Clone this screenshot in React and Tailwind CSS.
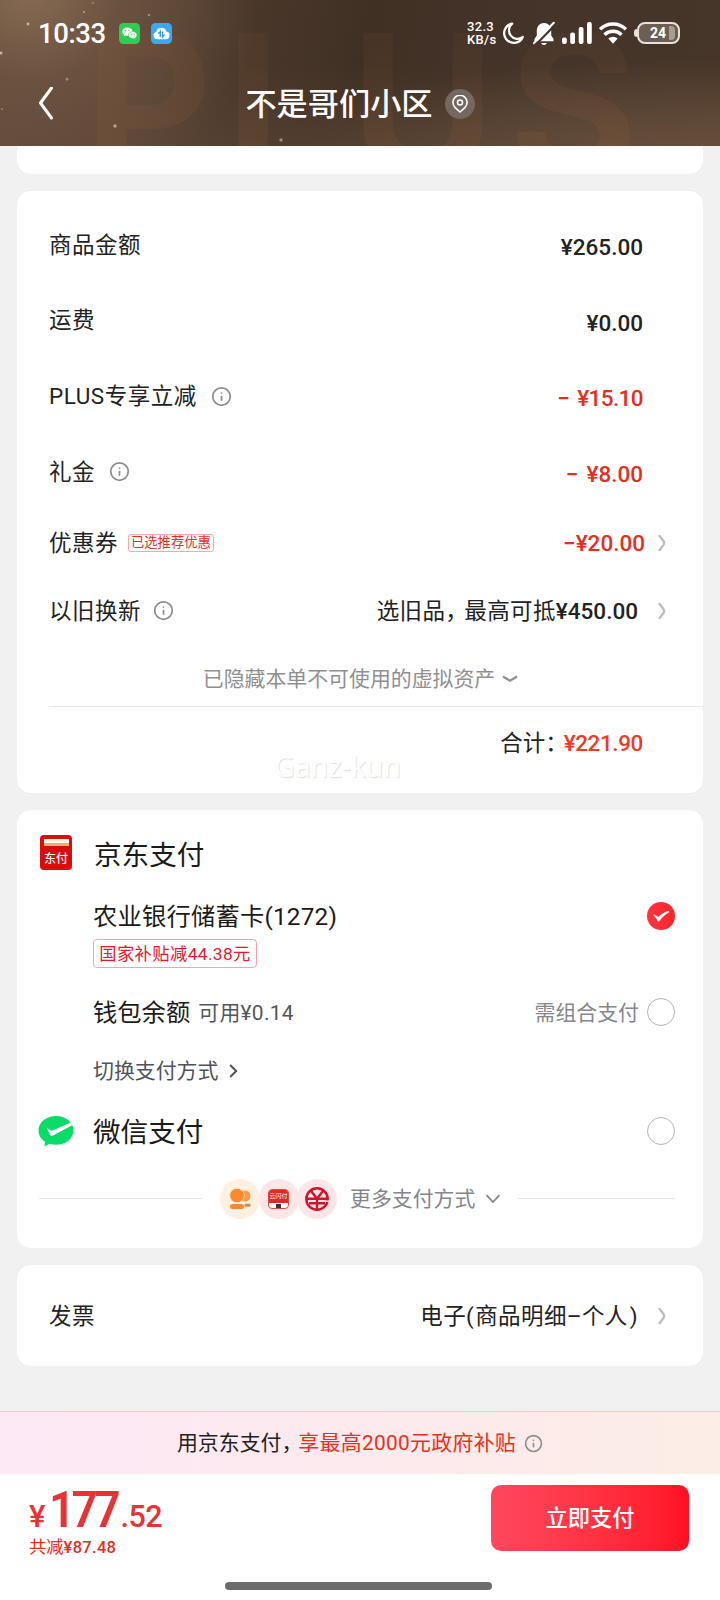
import { Info } from 'lucide-react'

const PRICE_ROWS = [
  { label: '商品金额', value: '¥265.00' },
  { label: '运费', value: '¥0.00' },
  { label: 'PLUS专享立减', value: '¥15.10', minus: true, info: true, tight: true },
  { label: '礼金', value: '¥8.00', minus: true, info: true },
]

const SPARKS = [
  { x: 28, y: 24, r: 1.4, o: 0.7 },
  { x: 1, y: 53, r: 1.5, o: 0.7 },
  { x: 84, y: 12, r: 1.2, o: 0.4 },
  { x: 149, y: 15, r: 1.2, o: 0.45 },
  { x: 93, y: 3, r: 1.6, o: 0.2 },
  { x: 67, y: 79, r: 1.5, o: 0.4 },
  { x: 115, y: 126, r: 1.7, o: 0.6 },
  { x: 281, y: 140, r: 1.7, o: 0.5 },
  { x: 2, y: 109, r: 1.2, o: 0.25 },
]

function InfoIcon({ className = '' }) {
  return <Info className={`shrink-0 text-[#8c8c8c] ${className}`} strokeWidth={2} />
}

function RightArrow({ className = '' }) {
  return (
    <svg viewBox="0 0 8 18" className={`h-[18px] w-2 shrink-0 ${className}`} fill="none" stroke="#bdbdbd" strokeWidth="2.4">
      <path d="M1.2 1C2 3.500 6.200 6.500 6.200 9S2 14.500 1.200 17" />
    </svg>
  )
}

function Radio() {
  return <span className="size-7 shrink-0 rounded-full border-[1.5px] border-[#b4b4b8]" />
}

function StatusBar() {
  return (
    <div className="flex h-[66px] items-center pl-[38px] pr-10 text-white">
      <span className="w-[67px] pt-0.5 text-[27.5px] leading-none font-medium tracking-[-0.4px]">10:33</span>
      {/* WeChat */}
      <svg viewBox="0 0 21 21" className="ml-3.5 size-[21px]">
        <rect width="21" height="21" rx="4.5" fill="#2bce55" />
        <path d="M8.3 4.5c-3 0-5.1 1.8-5.1 4.1 0 1.3.7 2.4 1.8 3.200l-.5 1.700 1.900-1c.6.2 1.200.3 1.900.3 2.900 0 5.200-1.900 5.200-4.200S11.200 4.500 8.300 4.500z" fill="#f4fff6" />
        <path d="M13.800 8.500c-2.500 0-4.400 1.600-4.400 3.600s1.900 3.600 4.400 3.600c.5 0 1-.1 1.500-.2l1.500.8-.4-1.400c1-.7 1.600-1.700 1.600-2.800 0-2-1.800-3.600-4.200-3.600z" fill="#e2f7e5" stroke="#2bce55" strokeWidth=".5" />
        <g fill="#2bb04e">
          <circle cx="6.6" cy="7.600" r=".7" />
          <circle cx="10" cy="7.600" r=".7" />
          <circle cx="12.500" cy="11.300" r=".5" />
          <circle cx="15.300" cy="11.300" r=".5" />
        </g>
      </svg>
      {/* cloud drive */}
      <svg viewBox="0 0 21 21" className="ml-[11px] size-[21px]">
        <rect width="21" height="21" rx="4.5" fill="#38a9f4" />
        <path d="M6 16.300a3.800 3.800 0 0 1-.8-7.400A5.300 5.300 0 0 1 15.500 8.600a3.900 3.900 0 0 1-.5 7.700z" fill="#fff" />
        <path d="M7.300 10.800 9.300 8.500v5.500M11.500 8.500V14l2.200-2.400" fill="none" stroke="#2f97e6" strokeWidth="1.300" />
      </svg>

      <div className="ml-auto flex items-center">
        <div className="w-[28px] text-[13px] leading-[13px] font-medium tracking-[0.3px]">
          <div>32.3</div>
          <div>KB/s</div>
        </div>
        <svg viewBox="0 0 22 23" className="ml-[7px] h-[23px] w-[22px]" fill="none" stroke="#fff" strokeWidth="2.300" strokeLinejoin="round">
          <path d="M10.200 1.600A9.700 9.700 0 1 0 20.800 15 8.200 8.200 0 0 1 10.200 1.600z" />
        </svg>
        {/* muted bell */}
        <svg viewBox="0 0 24 25" className="ml-2 h-[25px] w-6">
          <path d="M12 2a7 7 0 0 0-7.200 7v5.500L2.500 18v2.300h19V18l-2.300-3.500V9A7 7 0 0 0 12 2zM9 22a3.300 3.300 0 0 0 6 0z" fill="#fff" />
          <path d="M22.800 4.200 4.200 23.300" stroke="#44352a" strokeWidth="2.200" />
          <path d="M21.800 1.800 2 22" stroke="#fff" strokeWidth="2.200" strokeLinecap="round" />
        </svg>
        <svg viewBox="0 0 30 22" className="ml-1.5 h-[22px] w-[30px]" fill="#fff">
          <rect x="0" y="15.500" width="4.800" height="6.500" rx="2" />
          <rect x="8.200" y="10.500" width="4.800" height="11.500" rx="2" />
          <rect x="16.700" y="5" width="4.800" height="17" rx="2" />
          <rect x="25" y="0" width="4.800" height="22" rx="2" />
        </svg>
        <svg viewBox="0 0 28 22" className="ml-[7px] h-[22px] w-7" fill="none" stroke="#fff" strokeWidth="3.400">
          <path d="M1 7.300a18.500 18.500 0 0 1 26 0" />
          <path d="M5.500 12.800a12 12 0 0 1 17 0" />
          <path d="M14 21.800 9.300 16.600a7 7 0 0 1 9.400 0z" fill="#fff" stroke="none" />
        </svg>
        <div className="ml-[7px] flex items-center">
          <span className="h-2 w-[3px] rounded-l-full bg-[#e9e1da]" />
          <div className="flex h-[22px] w-[43px] items-center justify-end rounded-[8px] border-2 border-[#e9e1da] bg-[#6b5f54] pr-[3px]">
            <span className="mr-[3px] text-[14px] leading-none font-bold">24</span>
            <span className="h-[14px] w-[6px] rounded-r-[4px] bg-[#a59d96]" />
          </div>
        </div>
      </div>
    </div>
  )
}

function Header() {
  return (
    <header className="relative h-[146px] shrink-0 overflow-hidden bg-[radial-gradient(circle_at_30px_-10px,#876b53_0,#6b5240_90px,transparent_230px),radial-gradient(ellipse_at_100%_110%,#694f3a_0,transparent_45%),linear-gradient(100deg,#5a4234_0%,#503c2e_22%,#403024_50%,#44342a_75%,#463528_100%)]">
      <div className="absolute inset-x-0 bottom-0 h-20 bg-linear-to-t from-[#6d5443]/30 to-transparent" />
      <div className="absolute top-[33px] left-[84px] bg-linear-to-b from-[#a0683f]/8 to-[#a0683f]/16 bg-clip-text font-[Inter] text-[198px] leading-[142px] font-bold tracking-[13px] text-transparent select-none">
        PLUS
      </div>
      <svg className="absolute inset-0 h-full w-full" viewBox="0 0 720 146">
        {SPARKS.map((s) => (
          <circle key={`${s.x}-${s.y}`} cx={s.x} cy={s.y} r={s.r} fill="#f3dcc8" opacity={s.o} />
        ))}
      </svg>
      <div className="relative">
        <StatusBar />
        <div className="grid h-[76px] grid-cols-[60px_1fr_60px] items-center">
          <svg viewBox="0 0 16 34" className="ml-[38px] h-[34px] w-4" fill="none" stroke="#fff" strokeWidth="3" strokeLinecap="round" strokeLinejoin="round">
            <path d="M13.500 1 2.500 16l11 15" />
          </svg>
          <div className="flex items-center justify-center">
            <h1 className="pt-0.5 text-[31.200px] leading-none font-medium text-white">不是哥们小区</h1>
            <span className="ml-3 flex size-[30px] items-center justify-center rounded-full bg-[#766860]">
              <svg viewBox="0 0 16 18" className="h-[18px] w-4" fill="none" stroke="#fff" strokeWidth="1.600">
                <path d="M8 17 2.900 12.300a7.100 7.100 0 1 1 10.200 0z" strokeLinejoin="round" />
                <circle cx="8" cy="7.500" r="2.500" />
              </svg>
            </span>
          </div>
        </div>
      </div>
    </header>
  )
}

function PriceCard() {
  return (
    <section className="relative mt-[17px] h-[602px] rounded-[14px] bg-white pt-4 pl-8 text-[22.5px] leading-none">
      {PRICE_ROWS.map((row) => (
        <div key={row.label} className="flex h-[75.700px] items-center pr-[60px]">
          <span className="tracking-[0.5px]">{row.label}</span>
          {row.info && <InfoIcon className="ml-3.5 size-[21px]" />}
          <span className={`ml-auto pt-[5px] font-medium ${row.minus ? 'text-[#e1301f]' : ''} ${row.tight ? 'tracking-[-0.6px]' : ''}`}>
            {row.minus && <span className="mr-2">−</span>}
            {row.value}
          </span>
        </div>
      ))}
      <div className="flex h-[66px] items-center pr-[37px]">
        <span className="tracking-[0.5px]">优惠券</span>
        <span className="ml-2.5 flex h-[18px] items-center rounded-[3px] border border-[#f3a9a5] px-0.5 text-[13.300px] text-[#e1301f]">
          已选推荐优惠
        </span>
        <span className="ml-auto font-medium text-[#e1301f]">−¥20.00</span>
        <RightArrow className="ml-[13px]" />
      </div>
      <div className="flex h-[70px] items-center pr-[37px]">
        <span className="tracking-[0.5px]">以旧换新</span>
        <InfoIcon className="ml-3 size-[21px]" />
        <span className="ml-auto tracking-[0.400px]">
          选旧品，<span className="-ml-1">最高可抵</span>
          <span className="font-medium tracking-normal">¥450.00</span>
        </span>
        <RightArrow className="ml-5" />
      </div>
      <div className="flex h-[61px] items-center justify-center border-b border-[#e9e9e9] pt-[7px] pr-[31px] text-[20.900px] text-[#8f8f8f]">
        已隐藏本单不可使用的虚拟资产
        <svg viewBox="0 0 16 8" className="ml-[7px] h-2 w-4" fill="none" stroke="#8f8f8f" strokeWidth="2.200">
          <path d="M1 1.500 8 5.800l7-4.300" />
        </svg>
      </div>
      <div className="flex h-[73px] items-center justify-end pr-[60px]">
        合计：<span className="-ml-1 font-medium tracking-[-0.400px] text-[#ee3a26]">¥221.90</span>
      </div>
      <span className="absolute top-[561px] left-[257px] font-['Noto_Sans'] text-[28.400px] text-white [text-shadow:1px_1px_1px_#e0e0e0,0_0_1px_#f0f0f0]">
        Ganz-kun
      </span>
    </section>
  )
}

function JdPayIcon() {
  return (
    <div className="-mt-0.5 ml-px flex h-[35px] w-8 shrink-0 flex-col items-center rounded-[4px] bg-[#d70d10] pt-1">
      <div className="h-[7px] w-[25px] border-b-[3px] border-[#eeb06c] bg-[#fff6ea]" />
      <span className="mt-[7px] text-[12px] leading-none font-medium text-white">东付</span>
    </div>
  )
}

function WechatPayIcon() {
  return (
    <svg viewBox="0 0 36 31" className="-ml-px h-[31px] w-9 shrink-0">
      <path d="M18 0C8.300 0 .5 6.400.5 14.500c0 4.700 2.500 8.600 6.500 11.300L6.300 30.500l5.500-2.700c2 .6 4 .9 6.200.9 9.700 0 17.500-6.300 17.500-14.300S27.700 0 18 0z" fill="#0bdc68" />
      <path d="M8.500 11.500 12.500 19.500Q13.300 20.500 14.500 19.700L35 8.800 33.200 6.200 14.500 14.500Q13.500 15 12.500 14.200z" fill="#fff" />
    </svg>
  )
}

function MorePayments() {
  return (
    <div className="flex h-[45px] items-center">
      <span className="h-px w-[163px] bg-[#e8e8e8]" />
      <div className="ml-[18px] flex">
        <span className="flex size-10 items-center justify-center rounded-full bg-[#fff0e2]">
          <svg viewBox="0 0 22 22" className="size-[22px]" fill="#fb8a2c">
            <circle cx="16" cy="8" r="5.500" opacity=".85" />
            <circle cx="8" cy="7.500" r="7.300" stroke="#fff0e2" strokeWidth=".8" />
            <rect x="1" y="16" width="14" height="5" rx="2.500" />
            <rect x="15.500" y="15.800" width="6" height="3" rx="1" fill="#c98c50" />
          </svg>
        </span>
        <span className="-ml-[1.500px] flex size-10 items-center justify-center rounded-full bg-[#fde6e8]">
          <span className="flex h-5 w-[21px] flex-col items-center overflow-hidden rounded-[4px] border border-[#e04a42] bg-white">
            <span className="flex h-[13px] w-full items-center justify-center bg-[#de2a22] text-[6px] leading-none whitespace-nowrap text-white">云闪付</span>
            <span className="mt-px h-1 w-[5px] bg-[#343040]" />
          </span>
        </span>
        <span className="-ml-[1.500px] flex size-10 items-center justify-center rounded-full bg-[#fde6e8]">
          <svg viewBox="0 0 24 24" className="size-6" fill="none" stroke="#d0142c" strokeWidth="2.400">
            <circle cx="12" cy="12" r="10.700" />
            <path d="M6 4 12 11.500l6-7.500M2 11.800h21M4 16.200h16M12 11v12" />
            <path d="M20.500 14.200h3.500" stroke="#fde6e8" strokeWidth="1.400" />
          </svg>
        </span>
      </div>
      <span className="ml-[13px] pt-0.5 text-[20.900px] leading-none text-[#85858c]">更多支付方式</span>
      <svg viewBox="0 0 16 10" className="ml-2.5 h-2.5 w-4" fill="none" stroke="#85858c" strokeWidth="1.800">
        <path d="m1.500 1.200 6.500 6.800 6.500-6.800" />
      </svg>
      <span className="ml-[17px] h-px flex-1 bg-[#e8e8e8]" />
    </div>
  )
}

function PaymentCard() {
  return (
    <section className="mt-[17px] h-[438px] rounded-[14px] bg-white pt-3 pr-7 pl-[22px] leading-none text-[#1a1a1a]">
      <div className="flex h-[62px] items-center">
        <JdPayIcon />
        <span className="ml-[22px] pt-[5px] text-[27.600px]">京东支付</span>
      </div>
      <div className="ml-[54px] flex h-[65px] items-center">
        <span className="pt-0.5 text-[24.300px] tracking-[0.200px]">农业银行储蓄卡(1272)</span>
        <span className="mb-0.5 ml-auto flex size-7 items-center justify-center rounded-full bg-linear-to-r from-[#fb3540] to-[#fc2424]">
          <svg viewBox="0 0 18 12" className="h-3 w-[18px]" fill="#fff">
            <path d="M1 4.500C3 4.800 5 5.800 6.300 7 9 4.200 12.500 1.800 17 .800c.2.700.1 1.300-.4 2C12.500 5 9.500 8 7.500 11c-.6.600-1.300.6-1.800-.1C4.500 8.800 2.800 6.800 1 4.500z" />
          </svg>
        </span>
      </div>
      <div className="-mt-2.5 ml-[54px] flex h-[29px] w-[164px] items-center justify-center rounded-[4px] border border-[#f4a3ad] pt-0.5 text-[17.300px] tracking-[0.400px] text-[#e01a30]">
        国家补贴减44.38元
      </div>
      <div className="ml-[54px] flex h-[87px] items-center text-[20.900px]">
        <span className="pt-1 text-[24.300px]">钱包余额</span>
        <span className="ml-2 pt-1 tracking-[0.300px] text-[#55555c]">可用¥0.14</span>
        <span className="mr-2 ml-auto pt-1 text-[#85858c]">需组合支付</span>
        <Radio />
      </div>
      <div className="ml-[54px] flex h-[31px] items-center text-[20.900px] text-[#505259]">
        <span className="pt-0.5">切换支付方式</span>
        <svg viewBox="0 0 9 14" className="ml-[11px] h-3.5 w-[9px]" fill="none" stroke="#505259" strokeWidth="2">
          <path d="m1.200 1 6 6-6 6" />
        </svg>
      </div>
      <div className="flex h-[90px] items-center">
        <WechatPayIcon />
        <span className="ml-[19px] pt-1 text-[27.600px]">微信支付</span>
        <span className="ml-auto flex">
          <Radio />
        </span>
      </div>
      <MorePayments />
    </section>
  )
}

function Footer() {
  return (
    <footer className="shrink-0 bg-white">
      <div className="flex h-[63px] items-center justify-center border-t border-[#f2c6cb] bg-linear-to-r from-[#fde9f6] via-[#fdeaee] to-[#fcede6] text-[20.900px] leading-none">
        <span className="pt-px">
          用京东支付，<span className="-ml-1 tracking-[0.300px] text-[#e8301c]">享最高2000元政府补贴</span>
        </span>
        <InfoIcon className="ml-2 size-[19px]" />
      </div>
      <div className="flex h-[88px] items-start justify-between pt-2.5 pr-[31px] pl-[29px]">
        <div className="pt-0.5 text-[#e83336]">
          <div className="flex items-baseline leading-[48px] font-medium">
            <span className="text-[31px]">¥</span>
            <span className="ml-1 inline-block w-[71px] origin-left scale-x-92 text-[50px] font-semibold tracking-[-4px]">177</span>
            <span className="text-[30.500px] tracking-[-0.5px]">.52</span>
          </div>
          <div className="-mt-0.5 text-[17.300px] leading-none text-[#e1301f]">
            共减<span className="text-[16.500px] font-medium tracking-[0.300px]">¥87.48</span>
          </div>
        </div>
        <button className="mt-px h-[66px] w-[198px] rounded-[10px] bg-linear-to-r from-[#ff475d] to-[#ff0f23] pt-0.5 text-[22.300px] font-medium text-white">
          立即支付
        </button>
      </div>
      <div className="flex h-[38px] justify-center pt-5 pr-1">
        <span className="h-2 w-[267px] rounded-full bg-[#6b6b6b]" />
      </div>
    </footer>
  )
}

export default function App() {
  return (
    <div className="flex h-[1600px] w-[720px] flex-col overflow-hidden bg-[#f1f1f1] font-[Roboto,'Noto_Sans_CJK_SC',sans-serif] text-[#222]">
      <Header />
      <main className="flex-1 px-[17px]">
        <div className="h-7 rounded-b-[14px] bg-white" />
        <PriceCard />
        <PaymentCard />
        <section className="mt-[17px] flex h-[101px] items-center rounded-[14px] bg-white pr-[37px] pl-8 text-[22.500px] leading-none">
          <span className="pt-0.5 tracking-[0.500px]">发票</span>
          <span className="ml-auto pt-0.5 tracking-[0.400px]">
            电子<span className="mr-px">(</span>商品明细–个人<span className="ml-0.5">)</span>
          </span>
          <RightArrow className="ml-5" />
        </section>
      </main>
      <Footer />
    </div>
  )
}
